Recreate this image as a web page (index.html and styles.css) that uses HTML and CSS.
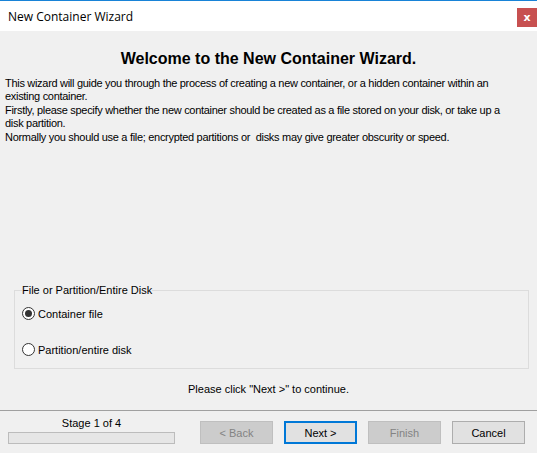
FILE: index.html
```html
<!DOCTYPE html>
<html>
<head>
<meta charset="utf-8">
<link rel="stylesheet" href="styles.css">
</head>
<body>
<div class="window">
  <div class="titlebar">
    <span class="title">New Container Wizard</span>
    <span class="close">x</span>
  </div>
  <div class="main">
    <h1 class="heading">Welcome to the New Container Wizard.</h1>
    <p class="intro">This wizard will guide you through the process of creating a new container, or a hidden container within an<br>existing container.<br>Firstly, please specify whether the new container should be created as a file stored on your disk, or take up a<br>disk partition.<br>Normally you should use a file; encrypted partitions or&nbsp; disks may give greater obscurity or speed.</p>
    <fieldset class="group">
      <legend class="legend">File or Partition/Entire Disk</legend>
      <label class="option"><span class="radio checked"></span><span>Container file</span></label>
      <label class="option second"><span class="radio"></span><span>Partition/entire disk</span></label>
    </fieldset>
    <div class="hint">Please click "Next &gt;" to continue.</div>
  </div>
  <div class="footer">
    <div class="stage">
      <div class="stage-label">Stage 1 of 4</div>
      <div class="progress"></div>
    </div>
    <div class="buttons">
      <div class="btn disabled">&lt; Back</div>
      <div class="btn default">Next &gt;</div>
      <div class="btn disabled">Finish</div>
      <div class="btn">Cancel</div>
    </div>
  </div>
</div>
</body>
</html>
```
FILE: styles.css
```css
html, body {
  margin: 0;
  padding: 0;
  background: #f0f0f0;
}
.window {
  width: 537px;
  height: 453px;
  display: flex;
  flex-direction: column;
  background: #f0f0f0;
  font-family: "Liberation Sans", Arial, sans-serif;
  font-size: 11px;
  color: #000;
  overflow: hidden;
}
.titlebar {
  height: 30px;
  border-top: 1px solid #1883d7;
  background: #fff;
  display: flex;
  align-items: center;
  justify-content: space-between;
  flex-shrink: 0;
}
.title {
  font-family: "Open Sans", "Noto Sans", sans-serif;
  font-size: 12px;
  padding-left: 8px;
  color: #000;
}
.close {
  width: 20px;
  height: 19px;
  margin-top: 3px;
  background: #c75050;
  color: #fff;
  font-weight: bold;
  font-family: "DejaVu Sans", sans-serif;
  font-size: 11px;
  display: flex;
  align-items: center;
  justify-content: center;
}
.main {
  flex: 1;
  display: flex;
  flex-direction: column;
}
.heading {
  margin: 18px 0 0 0;
  font-size: 16px;
  line-height: 20px;
  font-weight: bold;
  text-align: center;
}
.intro {
  margin: 8px 0 0 5px;
  line-height: 13.4px;
  white-space: nowrap;
  letter-spacing: -0.3px;
}
.group {
  margin: auto 8px 0 14px;
  padding: 2px 0 11px 7px;
  border: 1px solid #dcdcdc;
  min-width: 0;
}
.legend {
  padding: 0;
  margin-left: 0;
  line-height: 13px;
}
.option {
  display: flex;
  align-items: center;
  gap: 3px;
  height: 15px;
  margin-top: 7px;
}
.option.second {
  margin-top: 21px;
}
.radio {
  width: 11px;
  height: 11px;
  border: 1px solid #333;
  border-radius: 50%;
  background: #fff;
  position: relative;
  flex-shrink: 0;
}
.radio.checked::after {
  content: "";
  position: absolute;
  left: 2px;
  top: 2px;
  width: 7px;
  height: 7px;
  border-radius: 50%;
  background: #333;
}
.hint {
  text-align: center;
  line-height: 13px;
  margin: 14px 0 14px 0;
}
.footer {
  height: 42px;
  border-top: 1px solid #a0a0a0;
  display: flex;
  flex-shrink: 0;
}
.stage {
  width: 167px;
  margin-left: 8px;
  padding-top: 6px;
}
.stage-label {
  text-align: center;
  line-height: 13px;
  height: 15px;
}
.progress {
  height: 10px;
  border: 1px solid #bcbcbc;
  background: #e6e6e6;
}
.buttons {
  display: flex;
  gap: 11px;
  margin-left: 25px;
  padding-top: 10px;
}
.btn {
  width: 71px;
  height: 21px;
  border: 1px solid #adadad;
  background: #e1e1e1;
  display: flex;
  align-items: center;
  justify-content: center;
}
.btn.default {
  width: 69px;
  height: 19px;
  border: 2px solid #0078d7;
}
.btn.disabled {
  background: #cccccc;
  border-color: #bfbfbf;
  color: #838383;
}
```
